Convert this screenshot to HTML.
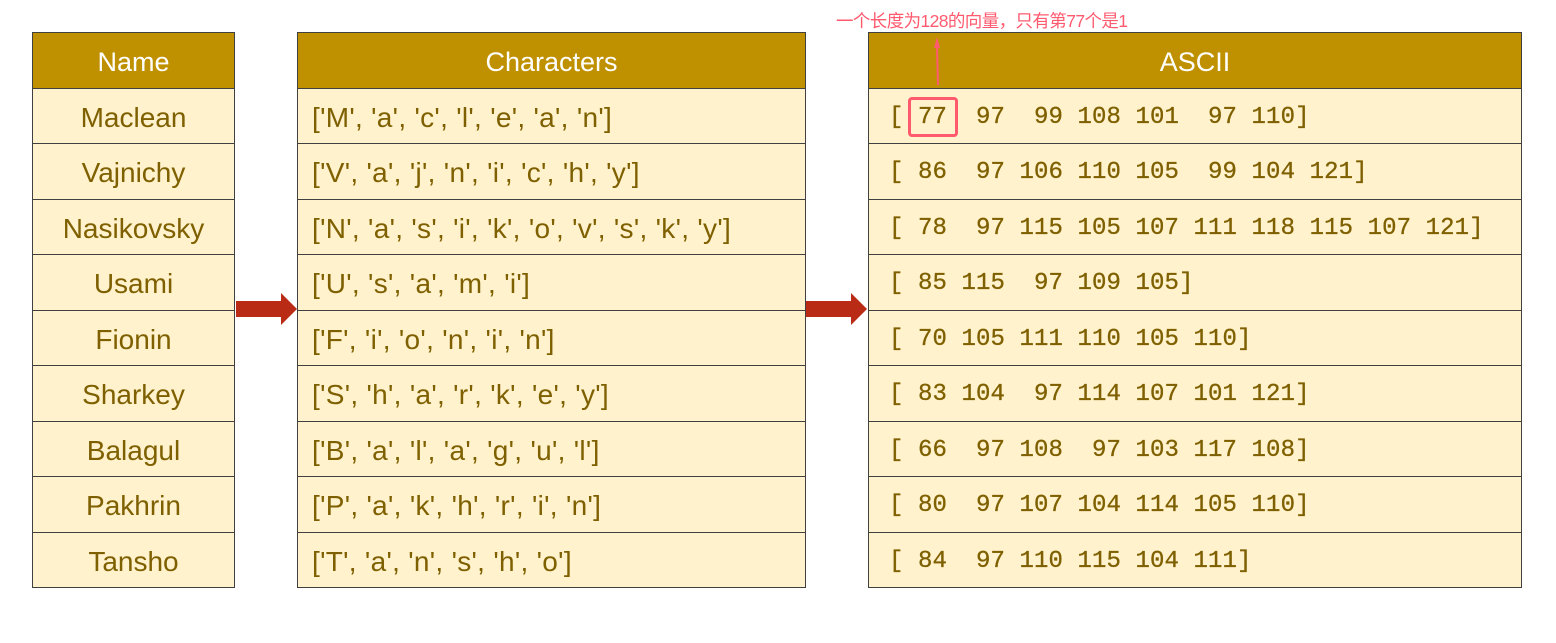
<!DOCTYPE html>
<html><head><meta charset="utf-8"><style>
body{margin:0;width:1556px;height:643px;background:#fff;position:relative;overflow:hidden;font-family:"Liberation Sans","Noto Sans CJK SC",sans-serif}
.col{position:absolute;top:32px;border:1.5px solid #404040}
.c{height:55.5px;box-sizing:border-box;border-top:1.5px solid #404040;background:#fff2cc;color:#7f6000;font-size:28px;line-height:57px;white-space:pre}
.h{height:54.5px;background:#bf9000;color:#fff;font-size:27px;line-height:58px;text-align:center}
#t1{left:32px;width:201px}#t1 .c{text-align:center}
#t2{left:297px;width:507px}#t2 .c{padding-left:14px;letter-spacing:0.3px}
#t3{left:868px;width:652px}#t3 .c{padding-left:20px;font-family:"Liberation Mono",monospace;font-size:24px;letter-spacing:0.1px;-webkit-text-stroke:0.3px #7f6000}
.ann{position:absolute;left:836px;top:8px;color:#ff5a6e;font-size:17.5px;letter-spacing:-0.6px}
</style></head><body>
<div class="col" id="t1"><div class="h">Name</div>
<div class="c">Maclean</div><div class="c">Vajnichy</div><div class="c">Nasikovsky</div><div class="c">Usami</div><div class="c">Fionin</div><div class="c">Sharkey</div><div class="c">Balagul</div><div class="c">Pakhrin</div><div class="c">Tansho</div></div>
<div class="col" id="t2"><div class="h">Characters</div>
<div class="c">['M', 'a', 'c', 'l', 'e', 'a', 'n']</div>
<div class="c">['V', 'a', 'j', 'n', 'i', 'c', 'h', 'y']</div>
<div class="c">['N', 'a', 's', 'i', 'k', 'o', 'v', 's', 'k', 'y']</div>
<div class="c">['U', 's', 'a', 'm', 'i']</div>
<div class="c">['F', 'i', 'o', 'n', 'i', 'n']</div>
<div class="c">['S', 'h', 'a', 'r', 'k', 'e', 'y']</div>
<div class="c">['B', 'a', 'l', 'a', 'g', 'u', 'l']</div>
<div class="c">['P', 'a', 'k', 'h', 'r', 'i', 'n']</div>
<div class="c">['T', 'a', 'n', 's', 'h', 'o']</div></div>
<div class="col" id="t3"><div class="h">ASCII</div>
<div class="c">[ 77  97  99 108 101  97 110]</div>
<div class="c">[ 86  97 106 110 105  99 104 121]</div>
<div class="c">[ 78  97 115 105 107 111 118 115 107 121]</div>
<div class="c">[ 85 115  97 109 105]</div>
<div class="c">[ 70 105 111 110 105 110]</div>
<div class="c">[ 83 104  97 114 107 101 121]</div>
<div class="c">[ 66  97 108  97 103 117 108]</div>
<div class="c">[ 80  97 107 104 114 105 110]</div>
<div class="c">[ 84  97 110 115 104 111]</div></div>
<div style="position:absolute;left:908px;top:97px;width:44px;height:34px;border:3px solid #ff5a6e;border-radius:4px"></div>
<div class="ann">一个长度为128的向量，只有第77个是1</div>
<svg style="position:absolute;left:0;top:0" width="1556" height="643">
<path d="M236 301H281V293L297 309L281 325V317H236Z" fill="#b92b14"/>
<path d="M806 301H851V293L867 309L851 325V317H806Z" fill="#b92b14"/>
<path d="M938 85L937 46" stroke="#ff5a6e" stroke-width="2"/>
<path d="M934 48L937 37L940 48Z" fill="#ff5a6e"/>
</svg>
</body></html>
